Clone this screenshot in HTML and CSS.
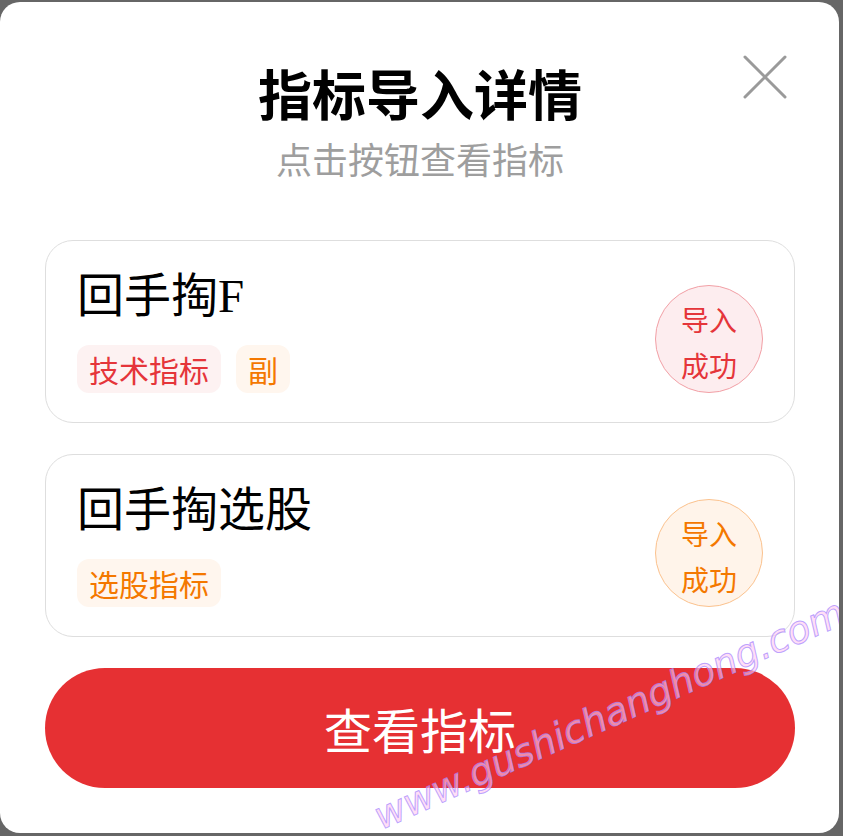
FILE: index.html
```html
<!DOCTYPE html>
<html lang="zh-CN">
<head>
    <meta charset="UTF-8">
    <meta name="viewport" content="width=device-width, initial-scale=1.0">
    <title>指标导入详情</title>
    <link rel="stylesheet" href="styles.css">
</head>
<body>
    <div class="modal">
        <button class="close-btn" aria-label="关闭">
            <svg width="44" height="44" viewBox="0 0 44 44">
                <path d="M2 2 L42 42 M42 2 L2 42" stroke="#9a9a9a" stroke-width="3" stroke-linecap="round" fill="none"/>
            </svg>
        </button>

        <h1 class="modal-title">指标导入详情</h1>
        <p class="modal-subtitle">点击按钮查看指标</p>

        <div class="card-list">
            <div class="card">
                <div class="card-info">
                    <div class="card-name">回手掏F</div>
                    <div class="tags">
                        <span class="tag tag-red">技术指标</span>
                        <span class="tag tag-orange">副</span>
                    </div>
                </div>
                <div class="status status-red">导入<br>成功</div>
            </div>

            <div class="card">
                <div class="card-info">
                    <div class="card-name">回手掏选股</div>
                    <div class="tags">
                        <span class="tag tag-orange">选股指标</span>
                    </div>
                </div>
                <div class="status status-orange">导入<br>成功</div>
            </div>
        </div>

        <button class="main-btn">查看指标</button>

        <div class="watermark">www.gushichanghong.com</div>
    </div>
</body>
</html>
```

FILE: styles.css
```css
body {
    margin: 0;
    background-color: #666;
    font-family: "Noto Sans CJK SC", sans-serif;
}
.modal {
    position: relative;
    box-sizing: border-box;
    width: 839px;
    height: 831px;
    margin: 2px 0 0 0;
    padding: 54px 44px 44px 45px;
    background-color: #fff;
    border-radius: 20px;
    overflow: hidden;
}
.close-btn {
    position: absolute;
    top: 53px;
    right: 52px;
    width: 44px;
    height: 44px;
    padding: 0;
    border: none;
    background: none;
}
.close-btn svg {
    display: block;
}
.modal-title {
    margin: 0;
    text-align: center;
    font-size: 54px;
    line-height: 73px;
    font-weight: bold;
    color: #000;
}
.modal-subtitle {
    margin: 4px 0 0;
    text-align: center;
    font-size: 36px;
    line-height: 50px;
    color: #9e9e9e;
}
.card-list {
    margin-top: 57px;
    display: flex;
    flex-direction: column;
    gap: 31px;
}
.card {
    box-sizing: border-box;
    height: 183px;
    padding: 25px 31px 29px 31px;
    border: 1px solid #dedede;
    border-radius: 28px;
    display: flex;
    align-items: center;
    justify-content: space-between;
}
.card-name {
    font-family: "Liberation Serif", "Noto Sans CJK SC", serif;
    font-size: 47px;
    line-height: 60px;
    color: #000;
}
.tags {
    margin-top: 19px;
    display: flex;
    gap: 15px;
}
.tag {
    height: 48px;
    padding: 0 12px;
    border-radius: 12px;
    font-size: 30px;
    line-height: 48px;
}
.tag-red {
    background-color: #fdf2f2;
    color: #e5353a;
}
.tag-orange {
    background-color: #fff6ee;
    color: #f47800;
}
.status {
    box-sizing: border-box;
    width: 108px;
    height: 108px;
    margin-top: 18px;
    padding-top: 6px;
    border-radius: 50%;
    display: flex;
    align-items: center;
    justify-content: center;
    text-align: center;
    font-size: 28px;
    line-height: 46px;
}
.status-red {
    background-color: #fdedef;
    border: 1px solid #f2a0a6;
    color: #e5353a;
}
.status-orange {
    background-color: #fff4ea;
    border: 1px solid #fbc28e;
    color: #f47800;
}
.main-btn {
    display: block;
    width: 100%;
    height: 120px;
    margin-top: 31px;
    border: none;
    border-radius: 60px;
    background-color: #e63033;
    color: #fff;
    font-family: "Noto Sans CJK SC", sans-serif;
    font-size: 48px;
}
.watermark {
    position: absolute;
    left: 376px;
    top: 794px;
    transform: rotate(-24deg);
    transform-origin: left center;
    font-family: "DejaVu Sans", sans-serif;
    font-style: italic;
    font-size: 38px;
    color: rgba(255, 200, 240, 0.6);
    -webkit-text-stroke: 1px rgba(160, 130, 255, 0.7);
    white-space: nowrap;
    pointer-events: none;
}
```
